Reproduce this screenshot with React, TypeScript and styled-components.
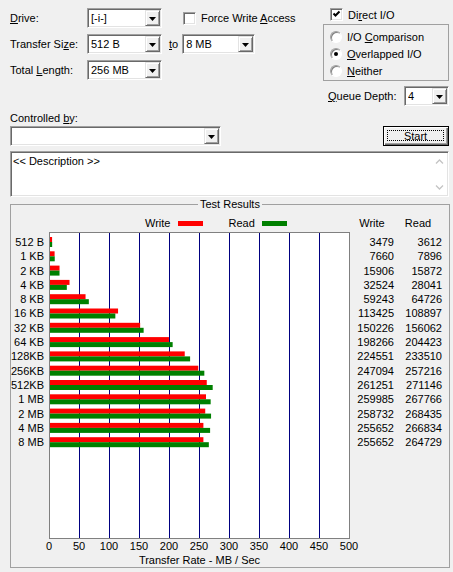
import React from "react"
import styled, { createGlobalStyle } from "styled-components"

const GlobalStyle = createGlobalStyle`
  html, body {
    margin: 0;
    padding: 0;
    background: #f0f0f0;
  }
  body {
    font-family: "Liberation Sans", Arial, sans-serif;
    font-size: 11px;
    color: #000;
  }
`

interface ResultRow {
  label: string
  write: number
  read: number
}

const results: ResultRow[] = [
  { label: "512 B", write: 3479, read: 3612 },
  { label: "1 KB", write: 7660, read: 7896 },
  { label: "2 KB", write: 15906, read: 15872 },
  { label: "4 KB", write: 32524, read: 28041 },
  { label: "8 KB", write: 59243, read: 64726 },
  { label: "16 KB", write: 113425, read: 108897 },
  { label: "32 KB", write: 150226, read: 156062 },
  { label: "64 KB", write: 198266, read: 204423 },
  { label: "128KB", write: 224551, read: 233510 },
  { label: "256KB", write: 247094, read: 257216 },
  { label: "512KB", write: 261251, read: 271146 },
  { label: "1 MB", write: 259985, read: 267766 },
  { label: "2 MB", write: 258732, read: 268435 },
  { label: "4 MB", write: 255652, read: 266834 },
  { label: "8 MB", write: 255652, read: 264729 },
]

const ROW_PITCH = 14.3
const PLOT_W = 301
const PLOT_H = 307
const PX_PER_MB = 0.6
const ticks = [0, 50, 100, 150, 200, 250, 300, 350, 400, 450, 500]

const Arrow = () => (
  <svg width="7" height="4" viewBox="0 0 7 4">
    <polygon points="0,0 7,0 3.5,4" fill="#000" />
  </svg>
)

const Combo: React.FC<{ width: number; value?: string }> = ({ width, value }) => (
  <S.Combo $width={width}>
    <S.ComboText>{value}</S.ComboText>
    <S.DropButton>
      <Arrow />
    </S.DropButton>
  </S.Combo>
)

const CheckBox: React.FC<{ checked?: boolean }> = ({ checked }) => (
  <S.CheckBox>
    {checked && (
      <svg width="9" height="9" viewBox="0 0 9 9">
        <path d="M1.5 3.5 L3.5 5.5 L7.5 1.5" stroke="#000" strokeWidth="2" fill="none" />
      </svg>
    )}
  </S.CheckBox>
)

const Radio: React.FC<{ checked?: boolean; children: React.ReactNode }> = ({ checked, children }) => (
  <S.RadioRow>
    <S.RadioCircle>{checked && <S.RadioDot />}</S.RadioCircle>
    <span>{children}</span>
  </S.RadioRow>
)

const Chart = () => (
  <svg width={PLOT_W} height={PLOT_H} style={{ display: "block" }}>
    <rect x="0.5" y="0.5" width={PLOT_W - 1} height={PLOT_H - 1} fill="#fff" stroke="#808080" />
    {ticks.slice(1, -1).map((_, k) => (
      <line key={k} x1={30.5 + k * 30} x2={30.5 + k * 30} y1={1} y2={PLOT_H - 1} stroke="#000080" />
    ))}
    {results.map((r, i) => (
      <g key={r.label}>
        <rect x={1} y={5 + i * ROW_PITCH} width={(r.write / 1000) * PX_PER_MB} height={5} fill="#ff0000" />
        <rect x={1} y={10 + i * ROW_PITCH} width={(r.read / 1000) * PX_PER_MB} height={5} fill="#008000" />
      </g>
    ))}
  </svg>
)

export default function App() {
  return (
    <>
      <GlobalStyle />
      <S.Window>
        <S.Top>
          <S.LeftControls>
            <S.FieldRow>
              <S.FieldLabel>
                <S.Key>D</S.Key>rive:
              </S.FieldLabel>
              <Combo width={75} value="[-i-]" />
              <S.CheckRow $indent={21}>
                <CheckBox />
                <span>
                  Force Write <S.Key>A</S.Key>ccess
                </span>
              </S.CheckRow>
            </S.FieldRow>
            <S.FieldRow>
              <S.FieldLabel>
                Transfer Si<S.Key>z</S.Key>e:
              </S.FieldLabel>
              <Combo width={75} value="512 B" />
              <S.ToLabel>
                <S.Key>t</S.Key>o
              </S.ToLabel>
              <Combo width={73} value="8 MB" />
            </S.FieldRow>
            <S.FieldRow>
              <S.FieldLabel>
                Total <S.Key>L</S.Key>ength:
              </S.FieldLabel>
              <Combo width={75} value="256 MB" />
            </S.FieldRow>
          </S.LeftControls>

          <S.RightControls>
            <S.CheckRow $indent={7}>
              <CheckBox checked />
              <span>
                Di<S.Key>r</S.Key>ect I/O
              </span>
            </S.CheckRow>
            <S.RadioGroup>
              <Radio>
                I/O <S.Key>C</S.Key>omparison
              </Radio>
              <Radio checked>
                <S.Key>O</S.Key>verlapped I/O
              </Radio>
              <Radio>
                <S.Key>N</S.Key>either
              </Radio>
            </S.RadioGroup>
            <S.QueueRow>
              <span>
                <S.Key>Q</S.Key>ueue Depth:
              </span>
              <Combo width={45} value="4" />
            </S.QueueRow>
          </S.RightControls>
        </S.Top>

        <S.ControlledLabel>
          Controlled <S.Key>b</S.Key>y:
        </S.ControlledLabel>
        <S.ControlRow>
          <Combo width={211} />
          <S.StartButton>
            <S.Focus>Start</S.Focus>
          </S.StartButton>
        </S.ControlRow>

        <S.Description>
          <S.DescText>&lt;&lt; Description &gt;&gt;</S.DescText>
          <S.ScrollBar>
            <svg width="9" height="5" viewBox="0 0 9 5">
              <path d="M1 4.5 L4.5 1 L8 4.5" stroke="#c4c4c4" strokeWidth="1.3" fill="none" />
            </svg>
            <svg width="9" height="5" viewBox="0 0 9 5">
              <path d="M1 0.5 L4.5 4 L8 0.5" stroke="#c4c4c4" strokeWidth="1.3" fill="none" />
            </svg>
          </S.ScrollBar>
        </S.Description>

        <S.ResultsGroup>
          <S.GroupTitle>Test Results</S.GroupTitle>
          <S.ResultsGrid>
            <S.Legend>
              <span>Write</span>
              <S.Swatch $color="#ff0000" $gap={8} />
              <S.LegendRead>Read</S.LegendRead>
              <S.Swatch $color="#008000" $gap={7} />
            </S.Legend>
            <S.NumHeader>
              <span>Write</span>
              <span>Read</span>
            </S.NumHeader>

            <S.RowLabels>
              {results.map((r) => (
                <S.RowLabel key={r.label}>{r.label}</S.RowLabel>
              ))}
            </S.RowLabels>
            <S.Plot>
              <Chart />
            </S.Plot>
            <S.Numbers>
              {results.map((r) => (
                <React.Fragment key={r.label}>
                  <span>{r.write}</span>
                  <span>{r.read}</span>
                </React.Fragment>
              ))}
            </S.Numbers>

            <S.Ticks>
              {ticks.map((t) => (
                <S.Tick key={t}>{t}</S.Tick>
              ))}
            </S.Ticks>
            <S.AxisTitle>Transfer Rate - MB / Sec</S.AxisTitle>
          </S.ResultsGrid>
        </S.ResultsGroup>
      </S.Window>
    </>
  )
}

const sunken = `
  border: 1px solid;
  border-color: #a0a0a0 #ffffff #ffffff #a0a0a0;
  box-shadow: inset 1px 1px #696969, inset -1px -1px #e3e3e3;
`

const S = {
  Window: styled.div`
    width: 453px;
    height: 572px;
    box-sizing: border-box;
    padding: 8px 4px 0 10px;
    overflow: hidden;
  `,
  Top: styled.div`
    display: flex;
  `,
  LeftControls: styled.div`
    width: 313px;
    display: flex;
    flex-direction: column;
    gap: 6px;
  `,
  FieldRow: styled.div`
    display: flex;
    align-items: center;
    height: 20px;
  `,
  FieldLabel: styled.span`
    width: 77px;
    flex-shrink: 0;
  `,
  Key: styled.span`
    text-decoration: underline;
  `,
  Combo: styled.div<{ $width: number }>`
    width: ${(p) => p.$width}px;
    height: 20px;
    box-sizing: border-box;
    flex-shrink: 0;
    background: #fff;
    ${sunken}
    display: flex;
    align-items: center;
    padding: 1px 1px 1px 3px;
  `,
  ComboText: styled.span`
    flex: 1;
    white-space: nowrap;
    overflow: hidden;
  `,
  DropButton: styled.div`
    width: 15px;
    height: 16px;
    box-sizing: border-box;
    background: #f0f0f0;
    border: 1px solid;
    border-color: #e3e3e3 #696969 #696969 #e3e3e3;
    box-shadow: inset 1px 1px #fff, inset -1px -1px #a0a0a0;
    display: flex;
    align-items: center;
    justify-content: center;
    padding-top: 1px;
  `,
  CheckRow: styled.div<{ $indent: number }>`
    display: flex;
    align-items: center;
    gap: 5px;
    margin-left: ${(p) => p.$indent}px;
    height: 13px;
  `,
  CheckBox: styled.div`
    width: 13px;
    height: 13px;
    box-sizing: border-box;
    background: #fff;
    ${sunken}
    display: flex;
    align-items: center;
    justify-content: center;
  `,
  ToLabel: styled.span`
    margin: 0 4px 0 7px;
  `,
  RightControls: styled.div`
    width: 126px;
    display: flex;
    flex-direction: column;
  `,
  RadioGroup: styled.div`
    margin-top: 3px;
    height: 57px;
    box-sizing: border-box;
    border: 1px solid #a0a0a0;
    padding: 3px 0 0 6px;
    display: flex;
    flex-direction: column;
  `,
  RadioRow: styled.div`
    height: 17px;
    display: flex;
    align-items: center;
    gap: 5px;
  `,
  RadioCircle: styled.div`
    width: 12px;
    height: 12px;
    box-sizing: border-box;
    border-radius: 50%;
    background: #fff;
    border: 1px solid;
    border-color: #a0a0a0 #ffffff #ffffff #a0a0a0;
    box-shadow: inset 1px 1px #808080;
    display: flex;
    align-items: center;
    justify-content: center;
  `,
  RadioDot: styled.div`
    width: 4px;
    height: 4px;
    border-radius: 50%;
    background: #000;
  `,
  QueueRow: styled.div`
    margin-top: 5px;
    height: 20px;
    display: flex;
    align-items: center;
    justify-content: space-between;
    padding-left: 5px;
  `,
  ControlledLabel: styled.div`
    margin-top: 6px;
    line-height: 13px;
  `,
  ControlRow: styled.div`
    margin-top: 1px;
    height: 20px;
    width: 439px;
    display: flex;
    justify-content: space-between;
  `,
  StartButton: styled.div`
    width: 66px;
    height: 20px;
    box-sizing: border-box;
    border: 1px solid #000;
    background: #f0f0f0;
    box-shadow: inset 1px 1px #fff, inset -1px -1px #696969, inset -2px -2px #a0a0a0;
    padding: 3px 4px 4px 3px;
    display: flex;
  `,
  Focus: styled.div`
    flex: 1;
    border: 1px dotted #000;
    display: flex;
    align-items: center;
    justify-content: center;
    line-height: 10px;
  `,
  Description: styled.div`
    margin-top: 5px;
    width: 439px;
    height: 46px;
    box-sizing: border-box;
    background: #fff;
    ${sunken}
    display: flex;
  `,
  DescText: styled.div`
    flex: 1;
    padding: 3px 2px;
  `,
  ScrollBar: styled.div`
    width: 17px;
    display: flex;
    flex-direction: column;
    justify-content: space-between;
    align-items: center;
    padding: 7px 0 6px;
  `,
  ResultsGroup: styled.div`
    position: relative;
    margin-top: 7px;
    width: 440px;
    height: 364px;
    box-sizing: border-box;
    border: 1px solid #a0a0a0;
  `,
  GroupTitle: styled.span`
    position: absolute;
    top: -7px;
    left: 187px;
    padding: 0 2px;
    background: #f0f0f0;
    line-height: 13px;
  `,
  ResultsGrid: styled.div`
    display: grid;
    grid-template-columns: 38px ${PLOT_W}px 1fr;
    grid-template-rows: 27px ${PLOT_H}px 14px 14px;
  `,
  Legend: styled.div`
    grid-column: 2;
    grid-row: 1;
    display: flex;
    align-items: center;
    align-self: end;
    padding: 0 0 2px 96px;
    line-height: 13px;
  `,
  LegendRead: styled.span`
    margin-left: 25px;
  `,
  Swatch: styled.span<{ $color: string; $gap: number }>`
    width: 25px;
    height: 5px;
    margin-left: ${(p) => p.$gap}px;
    background: ${(p) => p.$color};
  `,
  NumHeader: styled.div`
    grid-column: 3;
    grid-row: 1;
    align-self: end;
    padding-bottom: 2px;
    display: grid;
    grid-template-columns: 44px 48px;
    text-align: center;
    line-height: 13px;
  `,
  RowLabels: styled.div`
    grid-column: 1;
    grid-row: 2;
    padding: 3px 5px 0 0;
    display: flex;
    flex-direction: column;
    align-items: flex-end;
  `,
  RowLabel: styled.div`
    height: ${ROW_PITCH}px;
    line-height: ${ROW_PITCH}px;
    white-space: nowrap;
  `,
  Plot: styled.div`
    grid-column: 2;
    grid-row: 2;
  `,
  Numbers: styled.div`
    grid-column: 3;
    grid-row: 2;
    padding-top: 3px;
    display: grid;
    grid-template-columns: 44px 48px;
    grid-auto-rows: ${ROW_PITCH}px;
    align-content: start;
    line-height: ${ROW_PITCH}px;
    text-align: right;
  `,
  Ticks: styled.div`
    grid-column: 2;
    grid-row: 3;
    display: flex;
    margin-left: -15px;
    line-height: 14px;
  `,
  Tick: styled.span`
    width: 30px;
    flex-shrink: 0;
    text-align: center;
  `,
  AxisTitle: styled.div`
    grid-column: 2;
    grid-row: 4;
    text-align: center;
    line-height: 14px;
  `,
}
